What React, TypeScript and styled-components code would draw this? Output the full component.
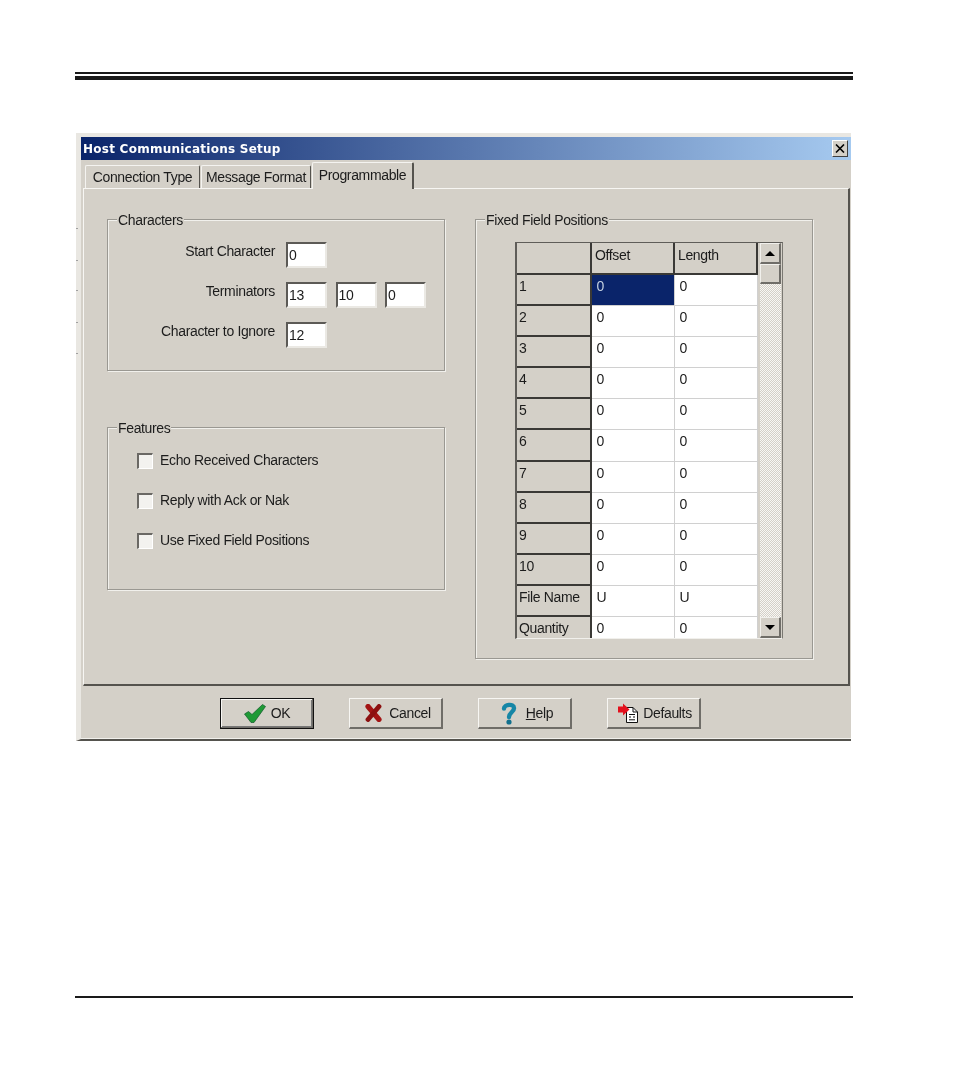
import React from "react";
import styled, { createGlobalStyle } from "styled-components";

const Global = createGlobalStyle`
  html, body {
    margin: 0;
    background: #fff;
  }
  * {
    box-sizing: border-box;
  }
`

const Page = styled.div`
  width: 953px;
  height: 1079px;
  padding: 72px 100px 0 75px;
  font-family: "Liberation Sans", Arial, sans-serif;
  font-size: 14px;
  letter-spacing: -0.35px;
  color: #1c1c1c;
  filter: blur(0.5px);
  overflow: hidden;
`

const ThinRule = styled.div`
  height: 2px;
  background: #1a1a1a;
`

const ThickRule = styled.div`
  height: 4px;
  margin-top: 2px;
  background: #1a1a1a;
`

const Win = styled.div`
  position: relative;
  width: 775px;
  height: 608px;
  margin: 53px 0 0 1px;
  display: flex;
  flex-direction: column;
  background: #d4d0c8;
  border-top: 4px solid #e9e7e2;
  border-left: 5px solid #e9e7e2;
  border-bottom: 2px solid #55534e;
`

const ScanMarks = styled.span`
  position: absolute;
  left: -5px;
  top: 91px;
  width: 2px;
  height: 1px;
  background: #a0a0a0;
  box-shadow: 0 32px #a0a0a0, 0 62px #a0a0a0, 0 94px #a0a0a0, 0 125px #a0a0a0;
`

const TitleBar = styled.div`
  height: 23px;
  flex: none;
  display: flex;
  align-items: center;
  justify-content: space-between;
  padding: 0 3px 0 2px;
  background: linear-gradient(90deg, #0a246a 0%, #a6caf0 100%);
  color: #fff;
  font-family: "DejaVu Sans", sans-serif;
  font-size: 12px;
  font-weight: 700;
  letter-spacing: 0.25px;
`

const CloseBtn = styled.div`
  width: 16px;
  height: 17px;
  display: flex;
  align-items: center;
  justify-content: center;
  background: #d4d0c8;
  border-top: 1px solid #fff;
  border-left: 1px solid #fff;
  border-right: 1px solid #404040;
  border-bottom: 1px solid #404040;
`

const TabStrip = styled.div`
  height: 28px;
  flex: none;
  display: flex;
  align-items: flex-end;
  padding-left: 4px;
`

const Tab = styled.div<{ $width: number; $active?: boolean }>`
  position: relative;
  z-index: ${p => (p.$active ? 1 : 0)};
  width: ${p => p.$width}px;
  height: ${p => (p.$active ? 27 : 23)}px;
  margin-right: ${p => (p.$active ? 0 : 1)}px;
  margin-bottom: ${p => (p.$active ? -1 : 0)}px;
  line-height: ${p => (p.$active ? 25 : 23)}px;
  text-align: center;
  background: #d4d0c8;
  border-top: 1px solid #f4f3f0;
  border-left: 1px solid #f4f3f0;
  border-right: ${p => (p.$active ? "2px solid #55534e" : "1px solid #55534e")};
  border-radius: 2px 2px 0 0;
`

const TabPanel = styled.div`
  height: 498px;
  flex: none;
  margin: 0 1px 0 2px;
  display: flex;
  gap: 30px;
  padding: 30px 0 0 23px;
  border-top: 1px solid #f7f6f3;
  border-left: 1px solid #f7f6f3;
  border-right: 2px solid #55534e;
  border-bottom: 2px solid #55534e;
`

const LeftColumn = styled.div`
  display: flex;
  flex-direction: column;
  gap: 56px;
`

const Group = styled.div<{ $height: number }>`
  position: relative;
  width: 338px;
  height: ${p => p.$height}px;
  border: 1px solid #9a9892;
  box-shadow: 1px 1px 0 #f1f0ec, inset 1px 1px 0 #f1f0ec;
`

const Legend = styled.span`
  position: absolute;
  top: -9px;
  left: 9px;
  padding: 0 1px;
  line-height: 18px;
  background: #d4d0c8;
`

const CharRows = styled.div`
  display: flex;
  flex-direction: column;
  gap: 14px;
  padding-top: 22px;
`

const CharRow = styled.div`
  display: flex;
  align-items: flex-start;
  gap: 8.5px;
`

const CharLabel = styled.label`
  width: 167px;
  margin-right: 2.5px;
  line-height: 18px;
  text-align: right;
`

const CharInput = styled.input`
  width: 41px;
  height: 26px;
  margin: 0;
  padding: 0 0 0 1px;
  font: inherit;
  letter-spacing: inherit;
  color: inherit;
  background: #fff;
  border-top: 2px solid #5c5a56;
  border-left: 2px solid #5c5a56;
  border-right: 2px solid #ebe9e4;
  border-bottom: 2px solid #ebe9e4;
  border-radius: 0;
  outline: none;
`

const FeatureRows = styled.div`
  display: flex;
  flex-direction: column;
  gap: 24px;
  padding: 25px 0 0 29px;
`

const FeatureRow = styled.div`
  display: flex;
  align-items: center;
  gap: 7px;
  height: 16px;
`

const CheckBox = styled.span`
  width: 16px;
  height: 16px;
  flex: none;
  background: #f3f2ef;
  border-top: 2px solid #6a6864;
  border-left: 2px solid #6a6864;
  border-right: 1px solid #fff;
  border-bottom: 1px solid #fff;
`

const FeatureText = styled.span`
  position: relative;
  top: -1px;
  line-height: 18px;
`

const GridFrame = styled.div`
  display: flex;
  gap: 2px;
  width: 268px;
  height: 397px;
  margin: 22px 0 0 39px;
  background: #d4d0c8;
  border-top: 1px solid #5f5d59;
  border-left: 2px solid #5f5d59;
  border-right: 1px solid #7a7872;
  border-bottom: 1px solid #f1f0ec;
`

const Table = styled.div`
  width: 241px;
  height: 395px;
  overflow: hidden;
  display: grid;
  grid-template-columns: 75px 83px 83px;
  grid-template-rows: 32px;
  grid-auto-rows: 31.1px;
  background: #fff;
`

const HeadCell = styled.div`
  padding: 3px 0 0 3px;
  line-height: 18px;
  background: #d4d0c8;
  border-right: 2px solid #3a3936;
  border-bottom: 2px solid #3a3936;
`

const RowHead = styled(HeadCell)`
  padding: 2px 0 0 2px;
`

const DataCell = styled.div<{ $selected?: boolean }>`
  padding: 2px 0 0 4.5px;
  line-height: 18px;
  background: ${p => (p.$selected ? "#0a246a" : "#fff")};
  color: ${p => (p.$selected ? "#c4d0e0" : "inherit")};
  border-right: 1px solid #d0d0d0;
  border-bottom: 1px solid #d0d0d0;
`

const ScrollBar = styled.div`
  width: 21px;
  display: flex;
  flex-direction: column;
`

const ScrollBtn = styled.div`
  height: 21px;
  flex: none;
  display: flex;
  align-items: center;
  justify-content: center;
  background: #d4d0c8;
  border-top: 1px solid #f1f0ec;
  border-left: 1px solid #f1f0ec;
  border-right: 2px solid #6f6d68;
  border-bottom: 2px solid #6f6d68;
`

const ScrollThumb = styled(ScrollBtn)`
  height: 20px;
`

const ScrollTrack = styled.div`
  flex: 1;
  background: repeating-conic-gradient(#d4d0c8 0 25%, #f8f7f4 0 50%) 0 0 / 2px 2px;
`

const Arrow = styled.span<{ $down?: boolean }>`
  width: 0;
  height: 0;
  border-left: 5px solid transparent;
  border-right: 5px solid transparent;
  ${p => (p.$down ? "border-top: 5px solid #000;" : "border-bottom: 5px solid #000;")}
`

const ButtonBar = styled.div`
  flex: 1;
  display: flex;
  align-items: flex-start;
  gap: 35px;
  padding: 12px 0 0 139px;
  border-bottom: 1px solid #f1f0ec;
`

const Button = styled.div<{ $default?: boolean; $gap: number; $shift: number }>`
  width: 94px;
  height: 31px;
  display: flex;
  align-items: center;
  justify-content: center;
  gap: ${p => p.$gap}px;
  padding-left: ${p => p.$shift}px;
  background: #d4d0c8;
  border-top: 1px solid #f7f6f3;
  border-left: 1px solid #f7f6f3;
  border-right: 2px solid #6f6d68;
  border-bottom: 2px solid #6f6d68;
  ${p => p.$default && "outline: 1px solid #111; outline-offset: -1px; box-shadow: inset 1px 1px 0 #f7f6f3, inset -1px -1px 0 #777;"}
`

const FooterRule = styled.div`
  height: 2px;
  margin-top: 255px;
  background: #1a1a1a;
`

const CheckIcon = () => <svg width="22" height="19" viewBox="0 0 22 19">
    <path d="M0.5 10L4.5 7.5L8 10.5L18.5 0.5L21.5 2.5L10 18.5H7Z" fill="#1f9a36" stroke="#10592a" strokeWidth="0.7" strokeLinejoin="round"/>
</svg>

const CrossIcon = () => <svg width="17" height="18" viewBox="0 0 17 18">
    <path d="M3 2.5L14 15.5" stroke="#a31414" strokeWidth="5.2" strokeLinecap="round"/>
    <path d="M14 2.5L3 15.5" stroke="#8c1010" strokeWidth="4.8" strokeLinecap="round"/>
</svg>

const HelpIcon = () => <svg width="16" height="23" viewBox="0 0 16 23">
    <path d="M3 6.5C3 2.5 12.8 1 13 6C13.2 10 8 10.5 8 15" fill="none" stroke="#1686a6" strokeWidth="4.4" strokeLinecap="round"/>
    <circle cx="8" cy="20" r="2.6" fill="#12708e"/>
</svg>

const DefaultsIcon = () => <svg width="20" height="20" viewBox="0 0 20 20">
    <path d="M8.5 4.5H15L19.5 9V19.5H8.5Z" fill="#fff" stroke="#111" strokeWidth="1"/>
    <path d="M15 4.5V9H19.5M11 11.5H17M11 14H13M15 14H17M11 16.8H17" fill="none" stroke="#111" strokeWidth="1"/>
    <path d="M0 3.5H5V0.5L11.5 6.5L5 12.5V9.5H0Z" fill="#e3101c"/>
</svg>

const CloseGlyph = () => <svg width="10" height="9" viewBox="0 0 10 9">
    <path d="M1 0.5L9 8.5M9 0.5L1 8.5" stroke="#000" strokeWidth="1.6"/>
</svg>

const rows = [
    { label: "1", value: "0" },
    { label: "2", value: "0" },
    { label: "3", value: "0" },
    { label: "4", value: "0" },
    { label: "5", value: "0" },
    { label: "6", value: "0" },
    { label: "7", value: "0" },
    { label: "8", value: "0" },
    { label: "9", value: "0" },
    { label: "10", value: "0" },
    { label: "File Name", value: "U" },
    { label: "Quantity", value: "0" },
]
const features = ["Echo Received Characters", "Reply with Ack or Nak", "Use Fixed Field Positions"]

const App: React.FC = () => {
    return (
        <Page>
            <Global />
            <ThinRule />
            <ThickRule />
            <Win>
                <ScanMarks />
                <TitleBar>
                    <span>Host Communications Setup</span>
                    <CloseBtn><CloseGlyph /></CloseBtn>
                </TitleBar>
                <TabStrip>
                    <Tab $width={115}>Connection Type</Tab>
                    <Tab $width={110}>Message Format</Tab>
                    <Tab $width={102} $active>Programmable</Tab>
                </TabStrip>
                <TabPanel>
                    <LeftColumn>
                        <Group $height={152}>
                            <Legend>Characters</Legend>
                            <CharRows>
                                <CharRow>
                                    <CharLabel>Start Character</CharLabel>
                                    <CharInput readOnly value="0" />
                                </CharRow>
                                <CharRow>
                                    <CharLabel>Terminators</CharLabel>
                                    <CharInput readOnly value="13" />
                                    <CharInput readOnly value="10" />
                                    <CharInput readOnly value="0" />
                                </CharRow>
                                <CharRow>
                                    <CharLabel>Character to Ignore</CharLabel>
                                    <CharInput readOnly value="12" />
                                </CharRow>
                            </CharRows>
                        </Group>
                        <Group $height={163}>
                            <Legend>Features</Legend>
                            <FeatureRows>
                                {features.map(f => (
                                    <FeatureRow key={f}>
                                        <CheckBox />
                                        <FeatureText>{f}</FeatureText>
                                    </FeatureRow>
                                ))}
                            </FeatureRows>
                        </Group>
                    </LeftColumn>
                    <Group $height={440}>
                        <Legend>Fixed Field Positions</Legend>
                        <GridFrame>
                            <Table>
                                <HeadCell />
                                <HeadCell>Offset</HeadCell>
                                <HeadCell>Length</HeadCell>
                                {rows.map((row, i) => (
                                    <React.Fragment key={row.label}>
                                        <RowHead>{row.label}</RowHead>
                                        <DataCell $selected={i === 0}>{row.value}</DataCell>
                                        <DataCell>{row.value}</DataCell>
                                    </React.Fragment>
                                ))}
                            </Table>
                            <ScrollBar>
                                <ScrollBtn><Arrow /></ScrollBtn>
                                <ScrollThumb />
                                <ScrollTrack />
                                <ScrollBtn><Arrow $down /></ScrollBtn>
                            </ScrollBar>
                        </GridFrame>
                    </Group>
                </TabPanel>
                <ButtonBar>
                    <Button $default $gap={5} $shift={1}><CheckIcon />OK</Button>
                    <Button $gap={7} $shift={5}><CrossIcon />Cancel</Button>
                    <Button $gap={9} $shift={5}><HelpIcon /><span><u>H</u>elp</span></Button>
                    <Button $gap={5} $shift={3}><DefaultsIcon />Defaults</Button>
                </ButtonBar>
            </Win>
            <FooterRule />
        </Page>
    )
}

export default App;
